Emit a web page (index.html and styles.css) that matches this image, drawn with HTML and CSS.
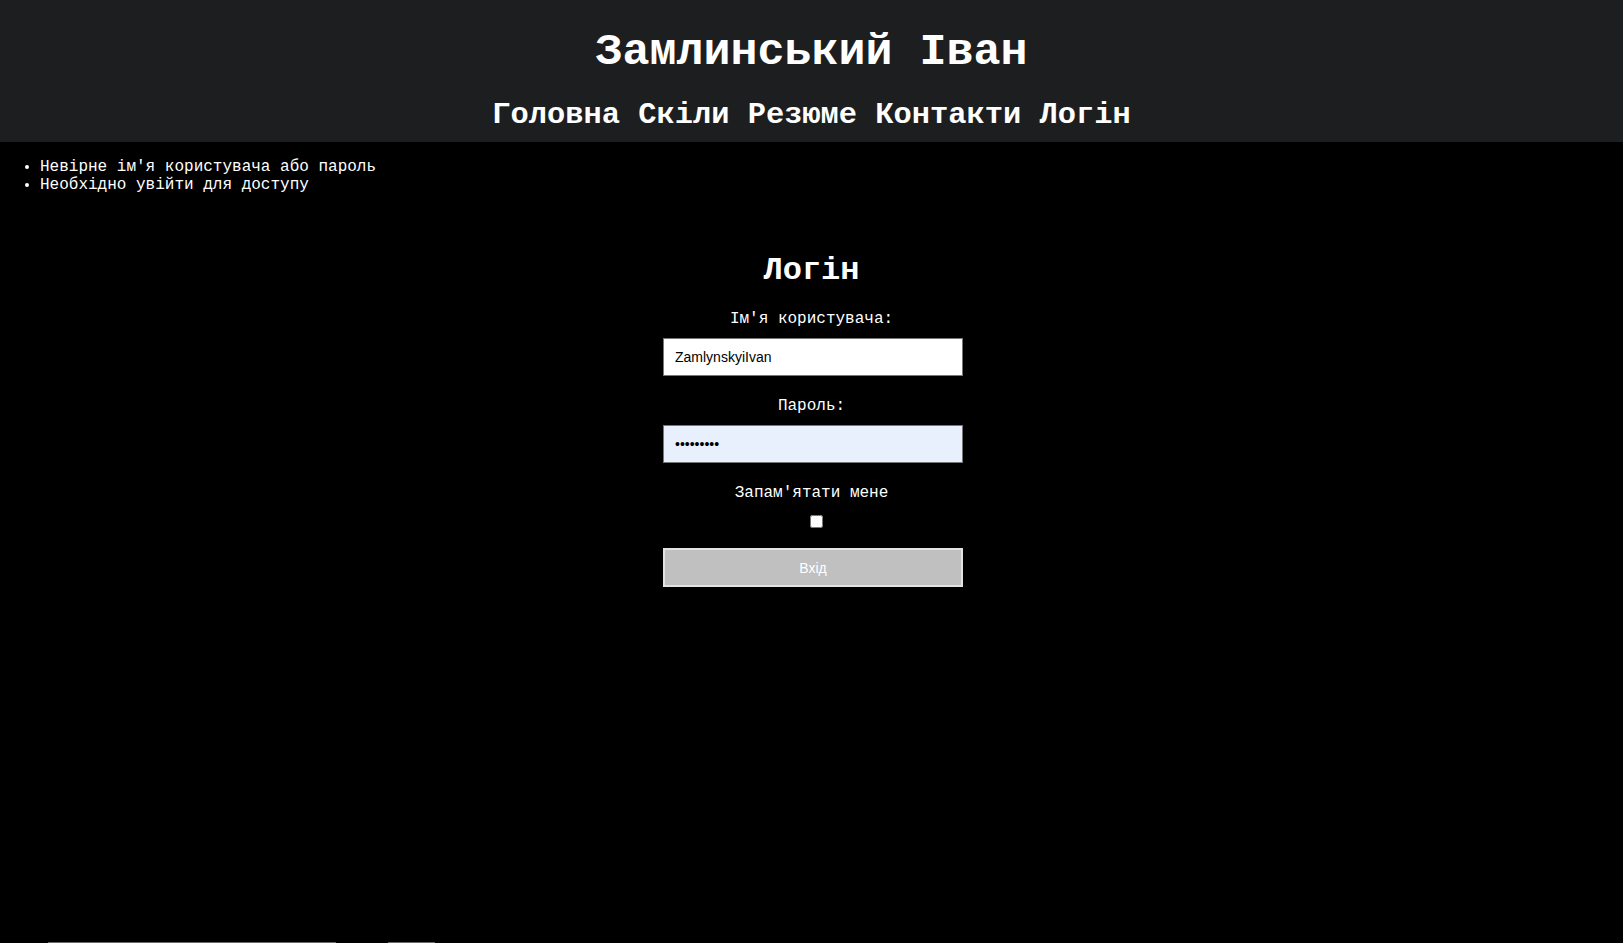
FILE: index.html
```html
<!DOCTYPE html>
<html lang="uk">
<head>
<meta charset="utf-8">
<title>Логін</title>
<link rel="stylesheet" href="styles.css">
</head>
<body>
<header class="site-header">
  <h1 class="site-title">Замлинський Іван</h1>
  <nav class="site-nav">
    <a href="#">Головна</a> <a href="#">Скіли</a> <a href="#">Резюме</a> <a href="#">Контакти</a> <a href="#">Логін</a>
  </nav>
</header>
<ul class="messages">
  <li>Невірне ім'я користувача або пароль</li>
  <li>Необхідно увійти для доступу</li>
</ul>
<section class="login">
  <h2 class="login-title">Логін</h2>
  <form class="login-form">
    <label class="field-label" for="username">Ім'я користувача:</label>
    <input class="field-input" id="username" type="text" value="ZamlynskyiIvan">
    <label class="field-label" for="password">Пароль:</label>
    <input class="field-input field-autofill" id="password" type="password" value="123456789">
    <label class="field-label" for="remember">Запам'ятати мене</label>
    <input class="remember-box" id="remember" type="checkbox">
    <button class="submit-btn" type="submit">Вхід</button>
  </form>
</section>
<footer class="page-footer">
  <span class="footer-bar footer-bar-wide"></span>
  <span class="footer-bar footer-bar-narrow"></span>
</footer>
</body>
</html>
```

FILE: styles.css
```css
html, body {
  margin: 0;
  padding: 0;
  background: #000;
  color: #fff;
  font-family: "Liberation Mono", "Courier New", monospace;
}

.site-header {
  background: #1d1e20;
  padding: 27px 0 10px;
  text-align: center;
}

.site-title {
  margin: 0;
  font-size: 45px;
  line-height: 51px;
  font-weight: bold;
}

.site-nav {
  margin-top: 20px;
  font-size: 30.4px;
  line-height: 34px;
  font-weight: bold;
}

.site-nav a {
  color: #fff;
  text-decoration: none;
}

.messages {
  margin: 16px 0;
  padding-left: 40px;
  font-size: 16px;
  line-height: 18px;
}

.login {
  margin-top: 59px;
  display: flex;
  flex-direction: column;
  align-items: center;
}

.login-title {
  margin: 0;
  font-size: 32px;
  line-height: 36px;
  font-weight: bold;
}

.login-form {
  margin-top: 21px;
  display: flex;
  flex-direction: column;
  align-items: center;
}

.field-label {
  display: block;
  font-size: 16px;
  line-height: 18px;
  margin-bottom: 10px;
}

.field-input {
  box-sizing: border-box;
  width: 300px;
  height: 38px;
  margin: 0 0 21px 3px;
  padding: 0 11px;
  border: 1px solid #767676;
  border-radius: 0;
  background: #fff;
  color: #000;
  font-family: "Liberation Sans", Arial, sans-serif;
  font-size: 14px;
}

.field-autofill {
  background: #e8f0fe;
}

.remember-box {
  width: 13px;
  height: 13px;
  margin: 3px 0 20px 9px;
}

.submit-btn {
  box-sizing: border-box;
  width: 300px;
  height: 39px;
  margin-left: 3px;
  border: 2px solid #e3e3e3;
  border-radius: 0;
  background: #c0c0c0;
  color: #fff;
  font-family: "Liberation Sans", Arial, sans-serif;
  font-size: 14px;
}

.page-footer {
  margin-top: 355px;
  display: flex;
  gap: 52px;
  padding-left: 48px;
}

.footer-bar {
  height: 2px;
  background: #6a6a6a;
}

.footer-bar-wide {
  width: 288px;
}

.footer-bar-narrow {
  width: 47px;
}
```
